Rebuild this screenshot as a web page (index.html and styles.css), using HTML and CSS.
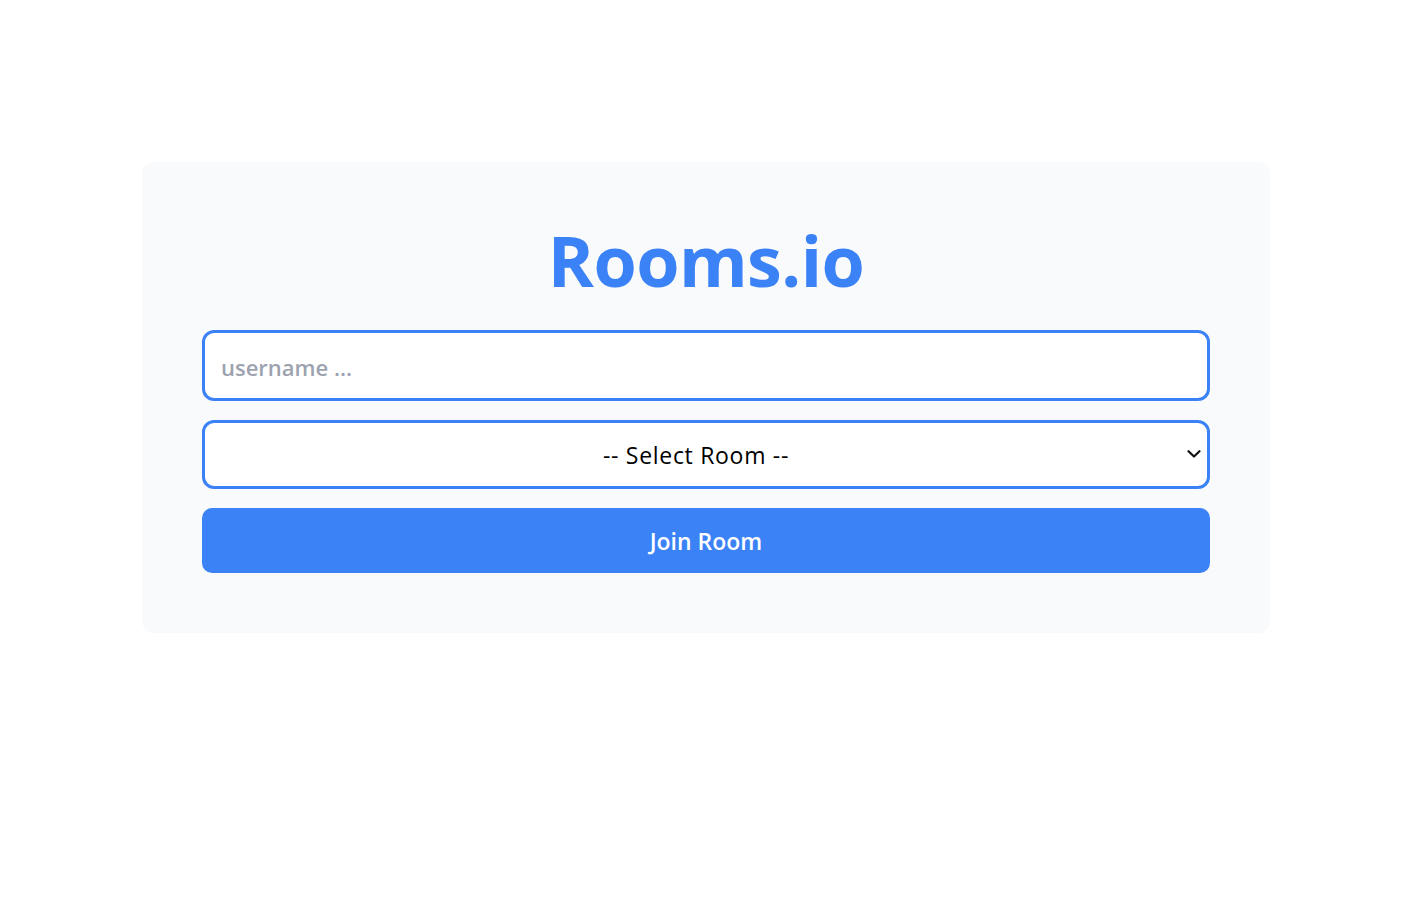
FILE: index.html
```html
<!DOCTYPE html>
<html lang="en">
<head>
<meta charset="utf-8">
<title>Rooms.io</title>
<link rel="stylesheet" href="styles.css">
</head>
<body>
<main class="page">
  <section class="card">
    <h1 class="title">Rooms.io</h1>
    <form class="form">
      <input class="field" type="text" placeholder="username ...">
      <div class="select-wrap">
        <select class="field select">
          <option>-- Select Room --</option>
        </select>
        <svg class="chevron" width="14" height="8" viewBox="0 0 14 8" aria-hidden="true">
          <path d="M1.5 1.2 L7 6.5 L12.5 1.2" fill="none" stroke="#111" stroke-width="2.2" stroke-linecap="round" stroke-linejoin="round"/>
        </svg>
      </div>
      <button class="btn" type="button">Join Room</button>
    </form>
  </section>
</main>
</body>
</html>
```
FILE: styles.css
```css
* { box-sizing: border-box; }
html, body { margin: 0; padding: 0; background: #ffffff; }
body { font-family: "Open Sans", "Noto Sans", sans-serif; }
.page {
  display: flex;
  justify-content: center;
  padding-top: 162px;
  padding-left: 4px;
}
.card {
  width: 1128px;
  background: #f9fafb;
  border-radius: 12px;
  padding: 60px;
  display: flex;
  flex-direction: column;
}
.title {
  margin: 0 0 32px;
  text-align: center;
  color: #3b82f6;
  font-size: 70px;
  font-weight: 700;
  line-height: 76px;
  letter-spacing: -0.6px;
}
.form {
  display: flex;
  flex-direction: column;
  gap: 19px;
}
.field {
  width: 100%;
  height: 71px;
  border: 3px solid #3b82f6;
  border-radius: 12px;
  background: #ffffff;
  font-family: inherit;
  font-size: 22px;
  font-weight: 600;
  padding: 2px 16px 0;
  outline: none;
  color: #000;
}
.field::placeholder { color: #9ca3af; }
.select-wrap {
  position: relative;
}
.select {
  display: block;
  height: 69px;
  -webkit-appearance: none;
  appearance: none;
  text-align: center;
  text-align-last: center;
  font-size: 23px;
  font-weight: 500;
  padding: 1px 30px 0 10px;
  letter-spacing: 0.7px;
}
.chevron {
  position: absolute;
  right: 9px;
  top: 30px;
  pointer-events: none;
}
.btn {
  height: 65px;
  border: none;
  border-radius: 10px;
  background: #3b82f6;
  color: #ffffff;
  font-family: inherit;
  font-size: 23px;
  font-weight: 600;
  padding-top: 2px;
}
```
